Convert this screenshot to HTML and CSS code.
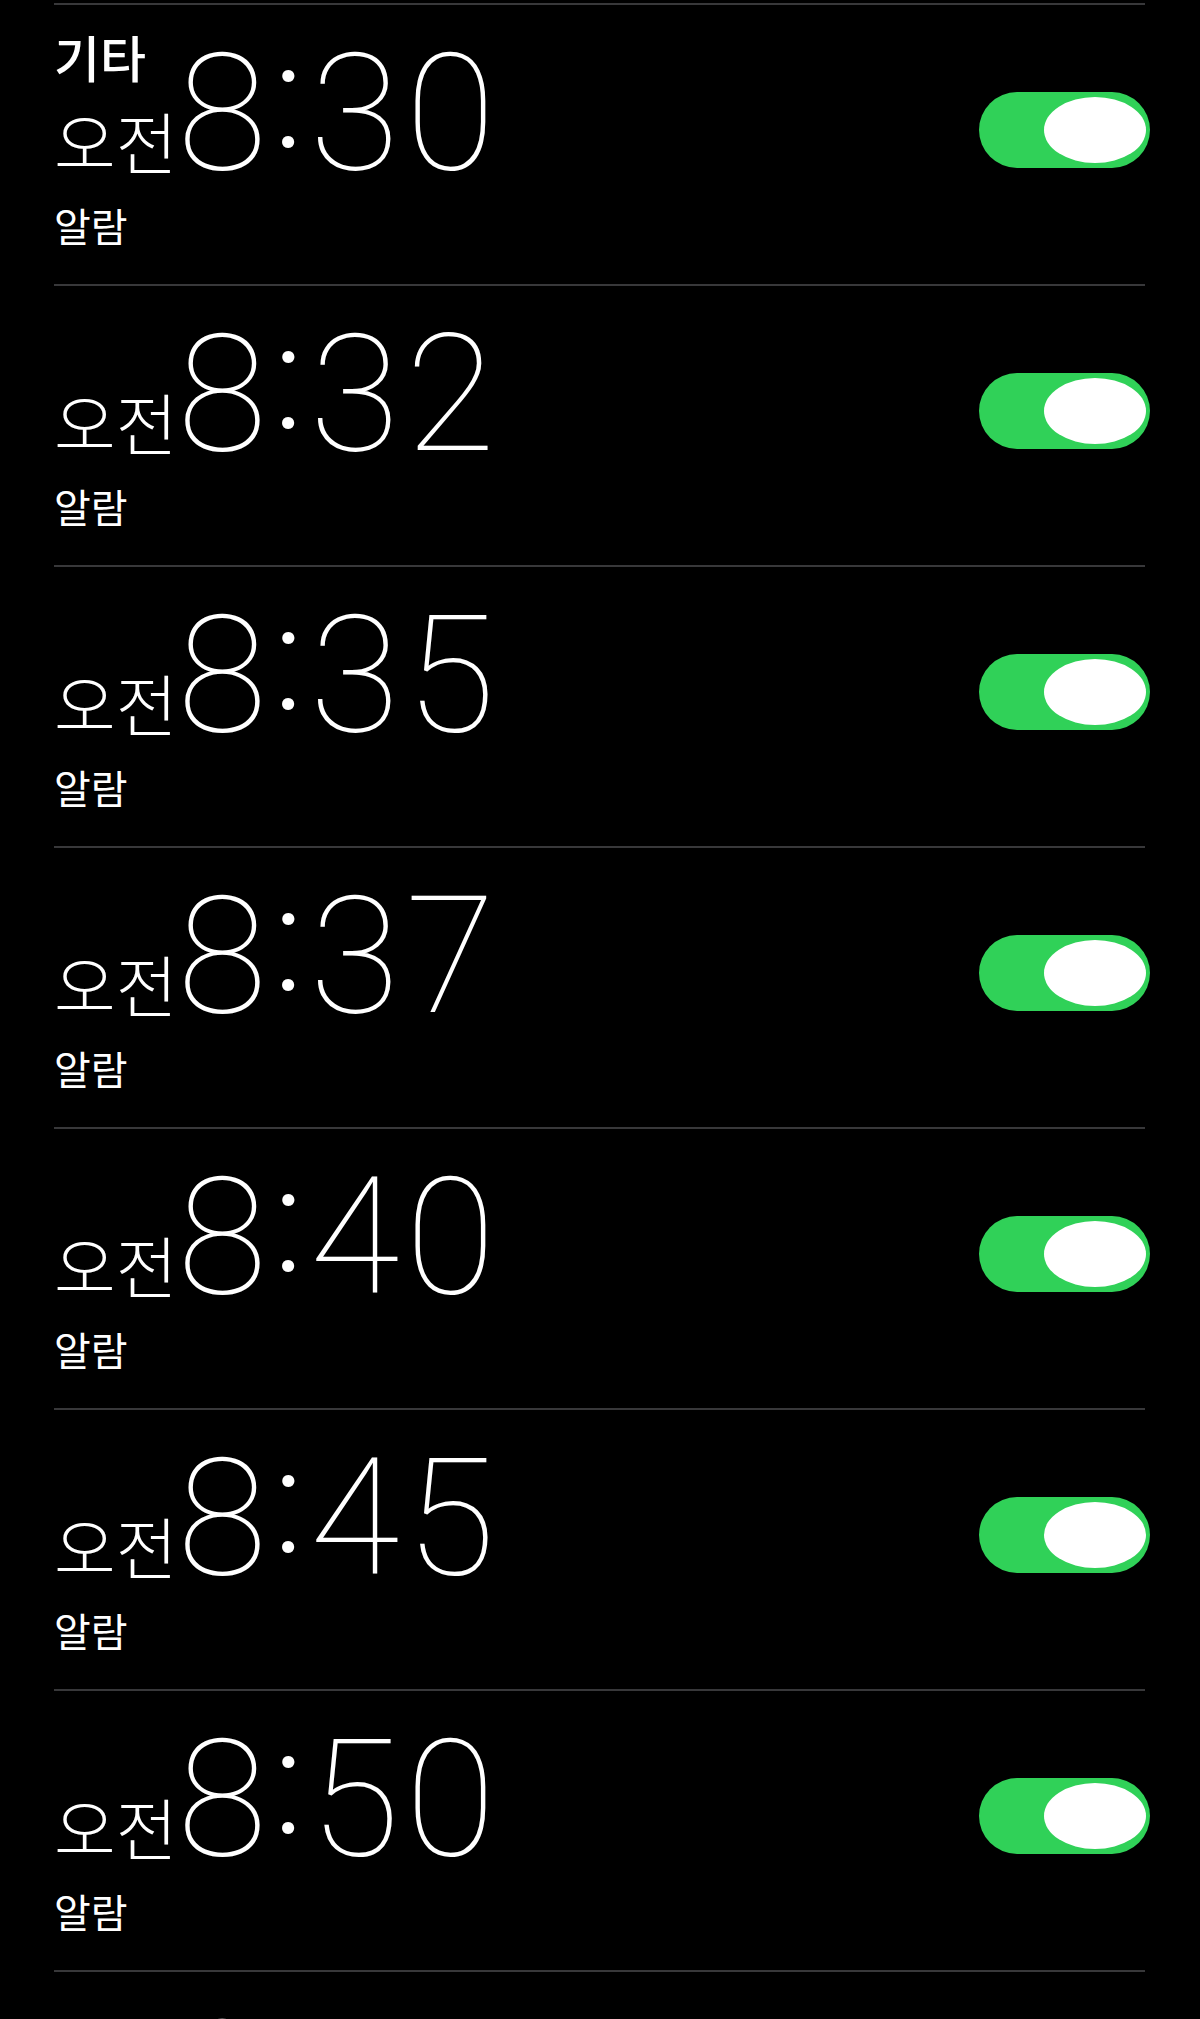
FILE: index.html
```html
<!DOCTYPE html>
<html lang="ko">
<head>
    <meta charset="UTF-8" />
    <title>알람</title>
<link rel="stylesheet" href="styles.css">
</head>
<body>
    <div class="list">
        <div class="row">
            <div class="section">기타</div>
            <div class="info">
                <div class="time"><span class="ampm">오전</span>8<span class="colon">:</span>30</div>
                <div class="label">알람</div>
            </div>
            <div class="toggle"><div class="knob"></div></div>
        </div>
        <div class="row">
            <div class="info">
                <div class="time"><span class="ampm">오전</span>8<span class="colon">:</span>32</div>
                <div class="label">알람</div>
            </div>
            <div class="toggle"><div class="knob"></div></div>
        </div>
        <div class="row">
            <div class="info">
                <div class="time"><span class="ampm">오전</span>8<span class="colon">:</span>35</div>
                <div class="label">알람</div>
            </div>
            <div class="toggle"><div class="knob"></div></div>
        </div>
        <div class="row">
            <div class="info">
                <div class="time"><span class="ampm">오전</span>8<span class="colon">:</span>37</div>
                <div class="label">알람</div>
            </div>
            <div class="toggle"><div class="knob"></div></div>
        </div>
        <div class="row">
            <div class="info">
                <div class="time"><span class="ampm">오전</span>8<span class="colon">:</span>40</div>
                <div class="label">알람</div>
            </div>
            <div class="toggle"><div class="knob"></div></div>
        </div>
        <div class="row">
            <div class="info">
                <div class="time"><span class="ampm">오전</span>8<span class="colon">:</span>45</div>
                <div class="label">알람</div>
            </div>
            <div class="toggle"><div class="knob"></div></div>
        </div>
        <div class="row">
            <div class="info">
                <div class="time"><span class="ampm">오전</span>8<span class="colon">:</span>50</div>
                <div class="label">알람</div>
            </div>
            <div class="toggle"><div class="knob"></div></div>
        </div>
        <div class="row">
            <div class="info">
                <div class="time"><span class="ampm">오전</span>8<span class="colon">:</span>55</div>
                <div class="label">알람</div>
            </div>
            <div class="toggle"><div class="knob"></div></div>
        </div>
    </div>
</body>
</html>
```

FILE: styles.css
```css
* {margin: 0; padding: 0; box-sizing: border-box;}
html, body {background: #000; height: 100%; overflow: hidden;}
body {
    color: #fff;
    font-family: "Noto Sans CJK KR", "Noto Sans", sans-serif;
}
.list {
    padding: 3px 55px 0 54px;
}
.row {
    position: relative;
    height: 281px;
    border-top: 2px solid #38383a;
    display: flex;
    justify-content: space-between;
    align-items: flex-start;
}
.section {
    position: absolute;
    top: 26px;
    left: 0;
    font-size: 50px;
    font-weight: 500;
    line-height: 1;
}
.info {
    padding-top: 26px;
}
.time {
    font-family: Roboto, "Liberation Sans", sans-serif;
    font-weight: 100;
    font-size: 164px;
    line-height: 164px;
    letter-spacing: 6px;
    white-space: nowrap;
}
.ampm {
    font-family: "Noto Sans CJK KR", sans-serif;
    font-weight: 300;
    font-size: 67px;
    line-height: 1;
    letter-spacing: 0;
}
.colon {
    font-size: 146px;
    font-weight: 300;
    vertical-align: 22px;
    line-height: 0;
}
.label {
    margin-top: 10px;
    font-size: 40px;
    line-height: 1;
    font-weight: 400;
}
.toggle {
    width: 171px;
    height: 76px;
    margin-top: 87px;
    margin-right: -5px;
    border-radius: 38px;
    background: #30d158;
    display: flex;
    justify-content: flex-end;
    align-items: center;
    padding-right: 4px;
}
.knob {
    width: 102px;
    height: 66px;
    border-radius: 50%;
    background: #fff;
}
```
